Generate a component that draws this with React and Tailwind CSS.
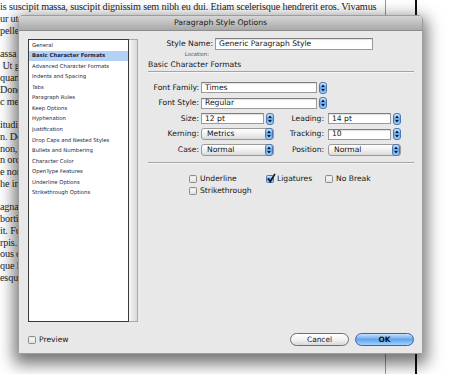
import React from "react";

const docLines = [
  "is suscipit massa, suscipit dignissim sem nibh eu dui. Etiam scelerisque hendrerit eros. Vivamus",
  "ur ut t",
  "pellen",
  "",
  "assa s",
  "\u00a0Ut gr",
  "quam",
  "Donec",
  "c met",
  "",
  "itudin",
  "n. Do",
  "non, s",
  "n orci",
  "e non",
  "he in",
  "",
  "agna",
  "borti",
  "it. Fu",
  "rpis.",
  "ous c",
  "que l",
  "esque",
];

const categories = [
  "General",
  "Basic Character Formats",
  "Advanced Character Formats",
  "Indents and Spacing",
  "Tabs",
  "Paragraph Rules",
  "Keep Options",
  "Hyphenation",
  "Justification",
  "Drop Caps and Nested Styles",
  "Bullets and Numbering",
  "Character Color",
  "OpenType Features",
  "Underline Options",
  "Strikethrough Options",
];

const Stepper = () => (
  <div className="flex h-[12px] w-[8px] shrink-0 items-center justify-center rounded-[3px] border border-[#4a78b8] bg-gradient-to-b from-[#d3e8fd] via-[#5ea2ee] to-[#9fd0fb]">
    <svg width="4" height="8" viewBox="0 0 4 8">
      <path d="M2 0.5 L3.8 3 L0.2 3Z M2 7.5 L3.8 5 L0.2 5Z" fill="#111" />
    </svg>
  </div>
);

const WhiteField = ({ value, width }) => (
  <div className={`flex items-center gap-[2px] ${width}`}>
    <div className="flex h-[11px] flex-1 items-center border border-[#9a9a9a] border-t-[#7d7d7d] bg-white pl-[3px] shadow-[inset_0_1px_1px_rgba(0,0,0,0.12)]">
      {value}
    </div>
    <Stepper />
  </div>
);

const PopUp = ({ value }) => (
  <div className="flex h-[12px] w-[73px] items-center rounded-[3px] border border-[#9a9a9a] bg-gradient-to-b from-white via-[#f1f1f1] to-[#d9d9d9]">
    <span className="flex-1 pl-[5px]">{value}</span>
    <Stepper />
  </div>
);

const Checkbox = ({ checked }) =>
  checked ? (
    <span className="relative inline-block h-[8px] w-[8px] shrink-0 rounded-[1.5px] border border-[#4a78b8] bg-gradient-to-b from-[#cfe5fc] via-[#5fa3ee] to-[#a6d4fc]">
      <svg
        className="absolute left-[0px] top-[-3px]"
        width="9"
        height="10"
        viewBox="0 0 9 10"
      >
        <path
          d="M1 5.5 L3.3 8.5 L8 0.8"
          fill="none"
          stroke="#111"
          strokeWidth="1.6"
        />
      </svg>
    </span>
  ) : (
    <span className="inline-block h-[8px] w-[8px] shrink-0 rounded-[1.5px] border border-[#8c8c8c] bg-gradient-to-b from-white to-[#e0e0e0] shadow-[inset_0_1px_1px_rgba(0,0,0,0.1)]" />
  );

const Row = ({ label, children }) => (
  <div className="flex h-[15.5px] items-center">
    <span className="w-[51px] text-right">{label}</span>
    <div className="ml-[2px] flex items-center">{children}</div>
  </div>
);

export default function App() {
  return (
    <div className="relative h-[374px] w-[450px] overflow-hidden bg-white">
      {/* document page behind the dialog */}
      <div className="pt-[1.4px] font-['Liberation_Serif',serif] text-[10.2px] tracking-[-0.15px] text-[#1e1e1e]">
        {docLines.map((line, i) => (
          <div
            key={i}
            className="h-[11.77px] whitespace-pre leading-[11.77px]"
          >
            {line}
          </div>
        ))}
      </div>
      <div className="absolute inset-y-0 left-[385px] w-px bg-[#b07ee8]" />
      <div className="absolute inset-y-0 left-[415px] w-[1.5px] bg-[#111]" />

      {/* dialog window */}
      <div className="absolute left-[18px] top-[15px] flex h-[339px] w-[405px] flex-col overflow-hidden rounded-t-[4px] border border-[#9d9d9d] font-['DejaVu_Sans',sans-serif] text-[7.6px] leading-none text-[#141414] shadow-[0_6px_16px_4px_rgba(0,0,0,0.55)]">
        <div className="flex h-[15px] shrink-0 items-center justify-center border-b border-[#8c8c8c] bg-gradient-to-b from-[#d6d6d6] to-[#a9a9a9] text-[7.7px] text-[#1a1a1a]">
          Paragraph Style Options
        </div>
        <div className="flex flex-1 flex-col bg-[#e8e8e8] pl-[9px] pr-[8px] pt-[8px]">
          <div className="flex">
            {/* category list */}
            <div className="flex h-[283px] w-[110px] shrink-0">
              <div className="flex-1 border border-[#3a3a3a] bg-white text-[5.3px] text-[#1c2440]">
                {categories.map((c, i) => (
                  <div
                    key={c}
                    className={`flex h-[10.55px] items-center whitespace-nowrap pl-[3px] ${
                      i === 1 ? "bg-[#b3d1f5] font-bold" : ""
                    }`}
                  >
                    {c}
                  </div>
                ))}
              </div>
              <div className="w-[9px] border-y border-r border-[#a9a9a9] bg-gradient-to-r from-[#f7f7f7] to-[#d9d9d9]" />
            </div>

            {/* right pane */}
            <div className="ml-[10px] -mt-[2px] flex w-[266px] flex-col">
              <div className="flex h-[14px] items-center">
                <span className="w-[65px] whitespace-nowrap text-right">
                  Style Name:
                </span>
                <div className="ml-[2px] flex h-[12px] w-[158px] items-center border border-[#9a9a9a] border-t-[#7d7d7d] bg-white pl-[3px] shadow-[inset_0_1px_1px_rgba(0,0,0,0.12)]">
                  Generic Paragraph Style
                </div>
              </div>
              <div className="flex h-[8px] items-center">
                <span className="w-[61px] text-right text-[5.3px] text-[#555]">
                  Location:
                </span>
              </div>
              <div className="flex h-[12px] items-center whitespace-nowrap">
                Basic Character Formats
              </div>
              <div className="h-[2px] border-t border-[#a4a4a4] border-b border-b-[#f6f6f6]" />

              <div className="mt-[7px] flex flex-col">
                <Row label="Font Family:">
                  <WhiteField value="Times" width="w-[126px]" />
                </Row>
                <Row label="Font Style:">
                  <WhiteField value="Regular" width="w-[126px]" />
                </Row>
                <div className="flex h-[15.5px] items-center">
                  <span className="w-[51px] text-right">Size:</span>
                  <div className="ml-[2px]">
                    <WhiteField value="12 pt" width="w-[73px]" />
                  </div>
                  <span className="w-[50px] text-right">Leading:</span>
                  <div className="ml-[4px]">
                    <WhiteField value="14 pt" width="w-[73px]" />
                  </div>
                </div>
                <div className="flex h-[15.5px] items-center">
                  <span className="w-[51px] text-right">Kerning:</span>
                  <div className="ml-[2px]">
                    <PopUp value="Metrics" />
                  </div>
                  <span className="w-[50px] text-right">Tracking:</span>
                  <div className="ml-[4px]">
                    <WhiteField value="10" width="w-[73px]" />
                  </div>
                </div>
                <div className="flex h-[15.5px] items-center">
                  <span className="w-[51px] text-right">Case:</span>
                  <div className="ml-[2px]">
                    <PopUp value="Normal" />
                  </div>
                  <span className="w-[50px] text-right">Position:</span>
                  <div className="ml-[4px]">
                    <PopUp value="Normal" />
                  </div>
                </div>
              </div>

              <div className="mt-[4px] h-[2px] border-t border-[#a4a4a4] border-b border-b-[#f6f6f6]" />

              <div className="mt-[10px] flex flex-col pl-[41px]">
                <div className="flex h-[11.5px] items-center">
                  <div className="flex w-[77px] items-center gap-[3px]">
                    <Checkbox />
                    <span>Underline</span>
                  </div>
                  <div className="flex w-[59px] items-center gap-[3px]">
                    <Checkbox checked />
                    <span>Ligatures</span>
                  </div>
                  <div className="flex items-center gap-[3px]">
                    <Checkbox />
                    <span>No Break</span>
                  </div>
                </div>
                <div className="flex h-[11.5px] items-center gap-[3px]">
                  <Checkbox />
                  <span>Strikethrough</span>
                </div>
              </div>
            </div>
          </div>

          {/* bottom bar */}
          <div className="mt-[11px] flex h-[13px] items-center">
            <Checkbox />
            <span className="ml-[3px]">Preview</span>
            <div className="ml-auto flex gap-[6px]">
              <button className="flex h-[13px] w-[59px] items-center justify-center rounded-full border border-[#6f6f6f] bg-gradient-to-b from-white via-[#f3f3f3] to-[#d8d8d8] text-[7.4px] text-[#141414]">
                Cancel
              </button>
              <button className="flex h-[13px] w-[59px] items-center justify-center rounded-full border border-[#3b63a5] bg-gradient-to-b from-[#c9e1fb] via-[#62a5ef] to-[#a2d2fc] text-[7.4px] font-semibold text-[#141414]">
                OK
              </button>
            </div>
          </div>
        </div>
      </div>
    </div>
  );
}
